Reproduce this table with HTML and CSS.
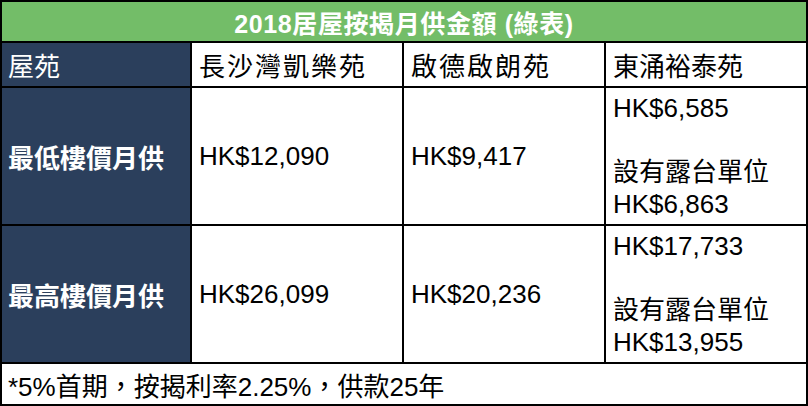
FILE: index.html
```html
<!DOCTYPE html>
<html lang="zh-Hant">
<head>
<meta charset="utf-8">
<title>2018居屋按揭月供金額</title>
<link rel="stylesheet" href="styles.css">
</head>
<body>
<div class="table">
  <div class="cell title">2018居屋按揭月供金額 (綠表)</div>

  <div class="cell label">屋苑</div>
  <div class="cell head wide">長沙灣凱樂苑</div>
  <div class="cell head wide">啟德啟朗苑</div>
  <div class="cell head">東涌裕泰苑</div>

  <div class="cell label bold">最低樓價月供</div>
  <div class="cell value">HK$12,090</div>
  <div class="cell value">HK$9,417</div>
  <div class="cell multi">
    <span>HK$6,585</span>
    <span>&nbsp;</span>
    <span>設有露台單位</span>
    <span>HK$6,863</span>
  </div>

  <div class="cell label bold">最高樓價月供</div>
  <div class="cell value">HK$26,099</div>
  <div class="cell value">HK$20,236</div>
  <div class="cell multi">
    <span>HK$17,733</span>
    <span>&nbsp;</span>
    <span>設有露台單位</span>
    <span>HK$13,955</span>
  </div>

  <div class="cell note">*5%首期，按揭利率2.25%，供款25年</div>
</div>
</body>
</html>
```

FILE: styles.css
```css
html, body {
  margin: 0;
  padding: 0;
  background: #ffffff;
}

body {
  font-family: "Liberation Sans", "Noto Sans CJK TC", sans-serif;
  font-size: 26px;
  color: #000000;
}

.table {
  display: grid;
  grid-template-columns: 188px 210px 200px 200px;
  grid-template-rows: 39px 43px 136px 136px 40px;
  gap: 2px;
  padding: 2px;
  background: #000000;
  width: 808px;
  height: 406px;
  box-sizing: border-box;
}

.cell {
  background: #ffffff;
  display: flex;
  align-items: center;
  padding: 0 6px;
  white-space: nowrap;
  overflow: hidden;
}

.title {
  grid-column: 1 / -1;
  justify-content: center;
  background: #73bd68;
  color: #ffffff;
  font-weight: bold;
  font-size: 25px;
  letter-spacing: 0.6px;
}

.label {
  background: #2b3f5c;
  color: #ffffff;
}

.bold {
  font-weight: bold;
}

.head {
  padding-left: 7px;
}

.wide {
  letter-spacing: 2px;
}

.value {
  padding-left: 7px;
}

.multi {
  flex-direction: column;
  align-items: flex-start;
  justify-content: center;
  padding-left: 7px;
  line-height: 32px;
}

.note {
  grid-column: 1 / -1;
  padding-left: 6px;
}
```
